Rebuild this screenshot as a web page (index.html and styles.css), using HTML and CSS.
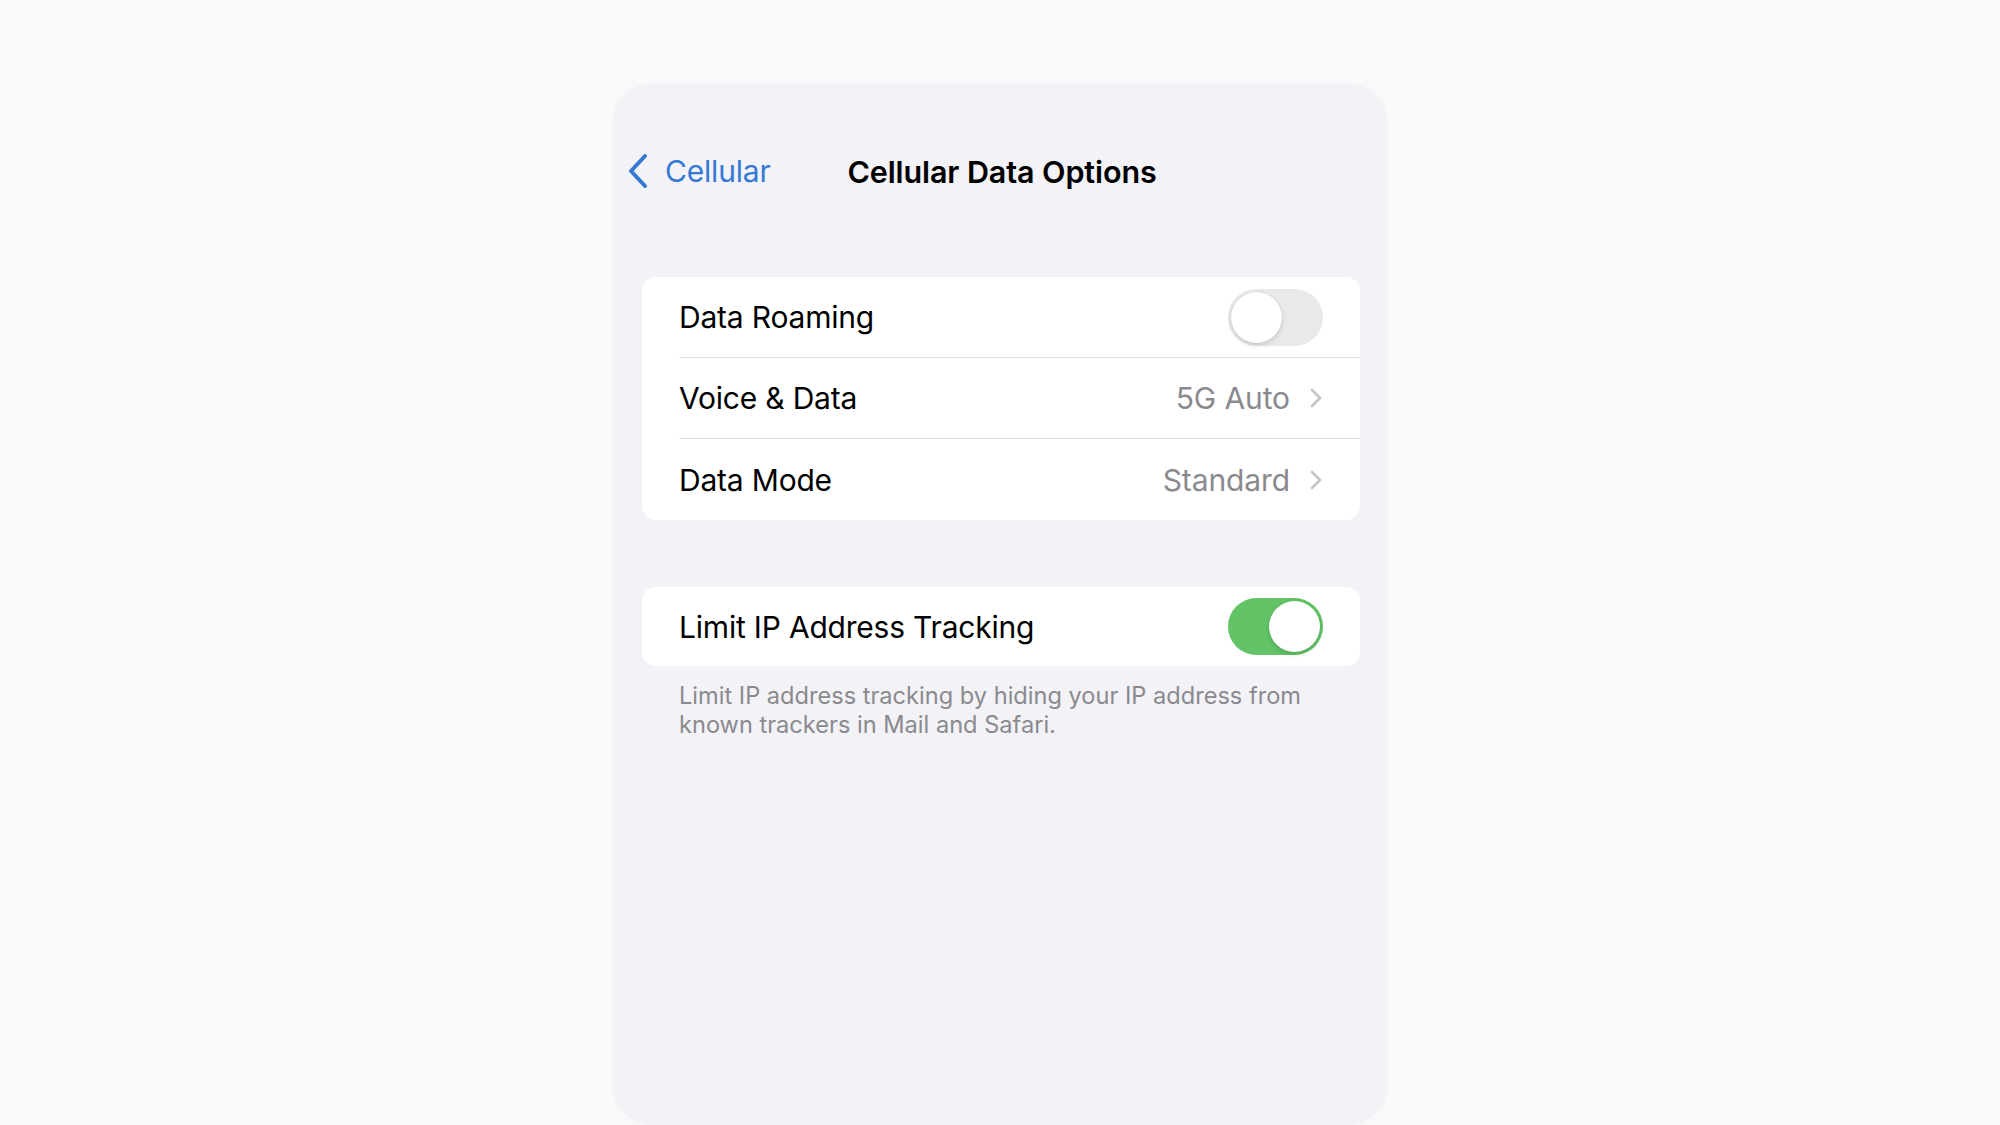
FILE: index.html
```html
<!DOCTYPE html>
<html lang="en">
<head>
    <meta charset="UTF-8" />
    <meta name="viewport" content="width=device-width, initial-scale=1.0" />
    <title>Cellular Data Options</title>
    <link rel="stylesheet" href="styles.css">
</head>
<body>
    <div class="phone">
        <!-- Navigation bar -->
        <div class="nav">
            <a class="back" href="#">
                <svg class="back-icon" width="22" height="36" viewBox="0 0 22 36">
                    <path d="M18 3 L4 18 L18 33" fill="none" stroke="currentColor" stroke-width="4" stroke-linecap="round" stroke-linejoin="round"/>
                </svg>
                <span>Cellular</span>
            </a>
            <h1 class="title">Cellular Data Options</h1>
            <div></div>
        </div>

        <!-- First group -->
        <div class="group">
            <div class="row">
                <span class="label">Data Roaming</span>
                <div class="toggle"><div class="thumb"></div></div>
            </div>
            <div class="row">
                <span class="label">Voice &amp; Data</span>
                <span class="value">5G Auto</span>
                <svg class="chevron" width="14" height="22" viewBox="0 0 14 22">
                    <path d="M3 3 L11 11 L3 19" fill="none" stroke="currentColor" stroke-width="2.6" stroke-linecap="round" stroke-linejoin="round"/>
                </svg>
            </div>
            <div class="row">
                <span class="label">Data Mode</span>
                <span class="value">Standard</span>
                <svg class="chevron" width="14" height="22" viewBox="0 0 14 22">
                    <path d="M3 3 L11 11 L3 19" fill="none" stroke="currentColor" stroke-width="2.6" stroke-linecap="round" stroke-linejoin="round"/>
                </svg>
            </div>
        </div>

        <!-- Second group -->
        <div class="group second">
            <div class="row">
                <span class="label">Limit IP Address Tracking</span>
                <div class="toggle on"><div class="thumb"></div></div>
            </div>
        </div>
        <p class="footer">Limit IP address tracking by hiding your IP address from known trackers in Mail and Safari.</p>
    </div>
</body>
</html>
```

FILE: styles.css
```css
/* Page */
body {
    margin: 0;
    background: #f9f9fa;
    font-family: Inter, "Noto Sans", "Liberation Sans", sans-serif;
    -webkit-font-smoothing: antialiased;
}

/* Phone screen panel */
.phone {
    width: 776px;
    height: 1042px;
    margin: 83px auto 0;
    padding: 58px 28px 0 30px;
    box-sizing: border-box;
    background: #f2f2f7;
    border-radius: 40px;
}

/* Nav bar */
.nav {
    display: grid;
    grid-template-columns: 1fr auto 1fr;
    align-items: center;
    height: 60px;
    margin: 0 -15px 76px -13px;
}

.back {
    display: flex;
    align-items: center;
    gap: 16px;
    color: #3478d4;
    text-decoration: none;
    font-size: 30px;
    letter-spacing: -0.2px;
}

.back-icon {
    margin-left: -2px;
}

.title {
    margin: 0;
    font-size: 30.5px;
    font-weight: 600;
    color: #000;
    letter-spacing: -0.1px;
}

/* Grouped list */
.group {
    background: #fff;
    border-radius: 14px;
    overflow: hidden;
}

.group.second {
    margin-top: 67px;
}

.row {
    display: flex;
    align-items: center;
    height: 81px;
    margin-left: 37px;
    padding-right: 37px;
    border-bottom: 1px solid #e0e0e4;
    box-sizing: border-box;
}

.row:last-child {
    border-bottom: none;
}

.group.second .row {
    height: 79px;
}

.label {
    flex: 1;
    font-size: 30px;
    color: #000;
    letter-spacing: -0.2px;
}

.value {
    font-size: 30px;
    color: #8a8a8e;
    letter-spacing: -0.1px;
    margin-right: 19px;
}

.chevron {
    color: #c4c4c7;
}

/* Toggle switch */
.toggle {
    width: 95px;
    height: 57px;
    border-radius: 29px;
    background: #e9e9eb;
    padding: 3px;
    box-sizing: border-box;
    display: flex;
}

.toggle .thumb {
    width: 51px;
    height: 51px;
    border-radius: 50%;
    background: #fff;
    box-shadow: 0 2px 5px rgba(0, 0, 0, 0.15), 0 0 1px rgba(0, 0, 0, 0.12);
}

.toggle.on {
    background: #62c466;
    justify-content: flex-end;
}

/* Footer note */
.footer {
    margin: 15px 30px 0 37px;
    font-size: 23.6px;
    line-height: 29px;
    color: #8a8a8e;
}
```
